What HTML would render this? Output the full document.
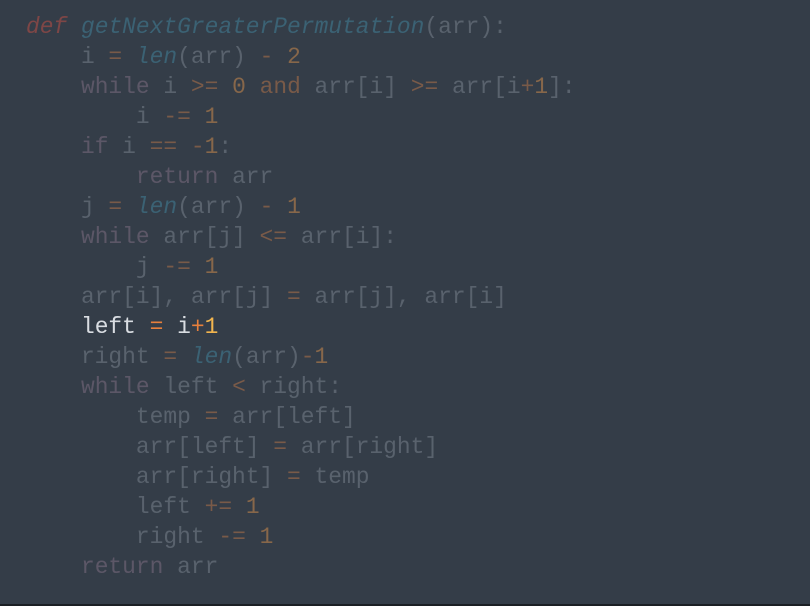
<!DOCTYPE html>
<html><head><meta charset="utf-8"><style>
html,body{margin:0;padding:0;}
body{width:810px;height:606px;background:#343d48;overflow:hidden;position:relative;}
.b{position:absolute;left:0;bottom:0;width:810px;height:2px;background:#1b1f24;}
pre{position:absolute;left:26px;top:12px;margin:0;font-family:"Liberation Mono",monospace;font-size:22.9px;line-height:30px;color:#59626d;}
.k{color:#5c5767}.o{color:#795a48}.n{color:#87674a}.f{color:#3b6274;font-style:italic}.d{color:#7e4646;font-style:italic}
.w{color:#d9dde2}.wo{color:#e8803c}.wn{color:#f2b54e}
</style></head><body>
<pre><span class="d">def</span> <span class="f">getNextGreaterPermutation</span>(arr):
    i <span class="o">=</span> <span class="f">len</span>(arr) <span class="o">-</span> <span class="n">2</span>
    <span class="k">while</span> i <span class="o">&gt;=</span> <span class="n">0</span> <span class="o">and</span> arr[i] <span class="o">&gt;=</span> arr[i<span class="o">+</span><span class="n">1</span>]:
        i <span class="o">-=</span> <span class="n">1</span>
    <span class="k">if</span> i <span class="o">==</span> <span class="o">-</span><span class="n">1</span>:
        <span class="k">return</span> arr
    j <span class="o">=</span> <span class="f">len</span>(arr) <span class="o">-</span> <span class="n">1</span>
    <span class="k">while</span> arr[j] <span class="o">&lt;=</span> arr[i]:
        j <span class="o">-=</span> <span class="n">1</span>
    arr[i], arr[j] <span class="o">=</span> arr[j], arr[i]
    <span class="w">left</span> <span class="wo">=</span> <span class="w">i</span><span class="wo">+</span><span class="wn">1</span>
    right <span class="o">=</span> <span class="f">len</span>(arr)<span class="o">-</span><span class="n">1</span>
    <span class="k">while</span> left <span class="o">&lt;</span> right:
        temp <span class="o">=</span> arr[left]
        arr[left] <span class="o">=</span> arr[right]
        arr[right] <span class="o">=</span> temp
        left <span class="o">+=</span> <span class="n">1</span>
        right <span class="o">-=</span> <span class="n">1</span>
    <span class="k">return</span> arr</pre>
<div class="b"></div>
</body></html>
